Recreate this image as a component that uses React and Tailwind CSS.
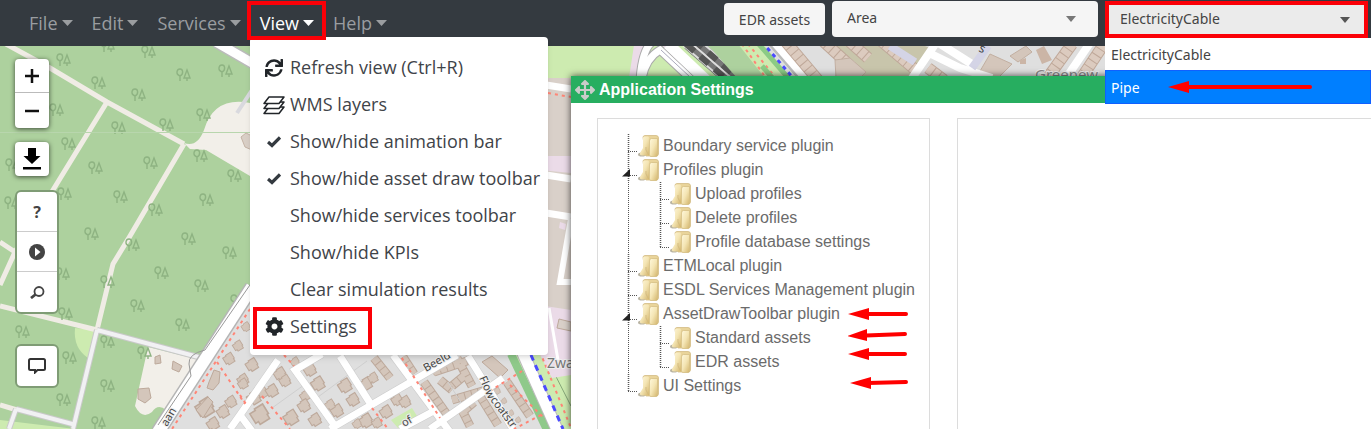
import React from "react";
import { FaSync, FaCog, FaArrowsAlt } from "react-icons/fa";

const TREES = [
  [63, 60], [107, 46], [148, 52], [183, 75], [225, 71], [98, 83], [138, 95], [203, 115], [166, 125],
  [56, 110], [118, 128], [68, 144], [95, 168], [150, 163], [200, 156], [234, 176], [120, 197], [64, 194],
  [11, 203], [12, 165], [155, 210], [206, 200], [91, 234], [188, 239], [132, 245], [229, 253], [161, 273],
  [201, 286], [62, 274], [107, 282], [137, 306], [182, 325], [65, 314], [22, 332], [69, 358], [107, 342],
  [107, 386], [63, 400], [98, 423], [237, 301], [144, 353],
];

const HOUSES = [
  [238, 346, 9], [229, 359, 10], [252, 365, 11], [243, 380, 10], [254, 398, 12], [263, 393, 9], [280, 374, 11],
  [285, 381, 10], [272, 391, 11], [205, 408, 16], [223, 412, 11], [231, 402, 10], [213, 424, 11], [310, 370, 11],
  [318, 384, 12], [295, 362, 8], [305, 396, 9], [345, 386, 12], [353, 400, 11], [337, 411, 11], [366, 384, 11],
  [373, 378, 9], [260, 415, 16], [291, 418, 13], [304, 406, 11], [315, 420, 11], [330, 405, 9], [386, 412, 11],
  [397, 400, 10], [405, 402, 10], [366, 421, 12], [377, 423, 9], [243, 384, 9], [357, 424, 8], [497, 391, 6],
  [504, 401, 5], [511, 413, 5], [518, 420, 5], [246, 327, 8],
];

const ROWS_OF_HOUSES = [
  "M374 358 L390 378", "M403 357 L414 374", "M424 382 L448 416", "M432 372 L448 362", "M434 372 L470 360",
  "M457 358 L472 386", "M452 400 L486 390", "M480 396 L498 425", "M507 382 L530 416", "M440 380 L452 390",
  "M464 376 L452 386", "M462 410 L470 426", "M474 402 L460 414",
];

const DOTTED = [
  "M250 309 L172 429", "M217 362 L245 404", "M262 396 L290 429", "M284 355 L294 366", "M398 352 L440 418",
  "M372 408 L388 429", "M522 371 L490 391", "M510 385 L544 418", "M541 415 L514 429", "M540 352 L571 428",
  "M548 93 L571 97", "M240 395 L246 404",
];

const ROADS = [
  "M278 360 L240 415 L230 429", "M240 415 L252 431", "M322 354 L295 370 L335 426", "M340 356 L370 403",
  "M330 429 L457 355", "M393 355 L450 432", "M430 429 L503 378", "M468 356 L488 388 L513 429", "M400 429 L432 412",
];

function MapBackground() {
  return (
    <svg
      aria-hidden="true"
      className="absolute inset-0 h-full w-full"
      viewBox="0 0 1371 429"
      preserveAspectRatio="xMinYMin slice"
    >
      <defs>
        <g id="tree" fill="none" stroke="#8eb382" strokeWidth="1.400">
          <path d="M-3 6 V1 M-3 1 C-8 -1 -6 -6 -3 -6 C0 -6 1 -1 -3 1 M4 6 V3 M1 3 L4 -5 L7 3 Z" />
        </g>
      </defs>
      <rect width="1371" height="429" fill="#add19e" />
      <path d="M75 328 L97 330 L88 358 Q73 348 75 328Z M0 420 L75 429 H0Z" fill="#cdebb0" />
      <path d="M184 143 Q197 148 204 130 Q214 96 250 103 V176 L206 150 L190 149Z" fill="#f2efe9" />
      <path d="M148 347 L200 360 L166 410 Q158 403 152 412 Q142 420 135 406Z" fill="#f2efe9" />
      <g fill="none" stroke="#f0ece5" strokeWidth="5">
        <path d="M6 44 L50 68 L107 102 L184 144" />
        <path d="M107 102 L53 190 L15 252 L0 285 M0 242 L15 252" />
        <path d="M184 144 L130 236 L113 264 L97 330" />
        <path d="M0 306 L97 330 M0 405 L17 410" />
      </g>
      {TREES.map(([x, y]) => (
        <use key={`${x}-${y}`} href="#tree" x={x} y={y} />
      ))}
      <path d="M97 330 L202 358 M97 330 L73 429 M16 409 L76 425 M16 409 L9 429" stroke="#c9c9c9" strokeWidth="6" fill="none" />
      <path d="M97 330 L202 358 M97 330 L73 429 M16 409 L76 425 M16 409 L9 429" stroke="#f1f1f3" strokeWidth="4" fill="none" />
      <path d="M0 132.500 H250" stroke="#b8d6ad" />
      <path d="M216 42 L254 64" stroke="#bbb" strokeWidth="12" />
      <path d="M216 42 L254 64" stroke="#fff" strokeWidth="9" />
      <path d="M252 90 L237 113" stroke="#d9d9de" strokeWidth="4" />
      <path d="M241 137 L246 133 L252 136 V150 L245 147Z" fill="#d9cfc6" stroke="#c4b3a6" />

      <path d="M250 290 L571 290 L571 429 H163Z" fill="#dfdfdf" />
      <g fill="#d4c6bb" stroke="#bda99b" strokeWidth="1">
        {HOUSES.map(([x, y, s]) => (
          <path
            key={`${x}-${y}`}
            transform={`translate(${x} ${y}) rotate(-32) scale(${s / 10})`}
            d="M-5 -4 H-1 V-5 H5 V2 H4 V5 H-3 V3 H-5Z"
          />
        ))}
        <path d="M209 382 L214 370 L220 372 L219 383 L213 390 L207 388Z M196 410 L208 397 L213 402 L203 418Z" />
        <path d="M138 389 L149 388 L151 398 L145 403 L138 399Z M173 361 L182 366 L179 372 L172 369Z M155 357 L160 355 L161 363 L155 364Z" />
        <path d="M482 362 L492 356 L508 370 L500 378Z" />
      </g>
      <g fill="none" stroke="#bda99b" strokeWidth="9">
        {ROWS_OF_HOUSES.map((d) => <path key={d} d={d} />)}
      </g>
      <g fill="none" stroke="#d4c6bb" strokeWidth="7" strokeDasharray="6 1">
        {ROWS_OF_HOUSES.map((d) => <path key={d} d={d} />)}
      </g>
      <path d="M272 408 L304 385 M318 397 L367 361 M448 382 L462 404" stroke="#cfcfcf" fill="none" />
      <path d="M391 420 L412 408 L417 416 L398 428Z" fill="#cdebb0" />
      <g fill="none" stroke="#cbcbcb" strokeWidth="8">
        {ROADS.map((d) => <path key={d} d={d} />)}
      </g>
      <g fill="none" stroke="#fff" strokeWidth="7">
        {ROADS.map((d) => <path key={d} d={d} />)}
      </g>

      <path d="M252 287 L158 432" stroke="#b5b5b5" strokeWidth="15" />
      <path d="M252 287 L158 432" stroke="#fff" strokeWidth="12" />
      <path d="M252 282 L205 350 Q188 354 189 364 L191 376 L158 425" stroke="#999" fill="none" />

      <path d="M510 355 H571 V429 H545Z" fill="#cdebb0" />
      <path d="M511 354 L548 432" stroke="#8fc98a" strokeWidth="8" />
      <path d="M522 351 L558 432" stroke="#bbb" strokeWidth="13" />
      <path d="M522 351 L558 432" stroke="#fff" strokeWidth="11" />
      <path d="M531 355 L563 429" stroke="#4b4bff" strokeWidth="3" strokeDasharray="6 5" />
      <path d="M545 355 L571 406" stroke="#86a779" />

      <path d="M540 76 H571 V310 H540Z" fill="#d9d0c9" />
      <path d="M540 156 H571 V173 L540 170Z M545 306 L571 310 V375 L552 378 L540 355Z" fill="#ebdbe8" />
      <path d="M540 84 L571 89 M540 174 L571 179 M540 212 L571 217" stroke="#fff" strokeWidth="7" />
      <path d="M571 219 L560 282 H571" stroke="#fff" strokeWidth="6" fill="none" />
      <path d="M549 308 L558 360" stroke="#fff" strokeWidth="3" />
      <path d="M559 319 L571 322 V331 L557 328Z" fill="#d9d0c9" stroke="#bda99b" />
      <path d="M560 222 L566 224 L565 230 L559 228Z" fill="#ebdbe8" />

      <g fill="none" stroke="#ff8576" strokeWidth="2" strokeDasharray="3 4">
        {DOTTED.map((d) => <path key={d} d={d} />)}
      </g>
      <g fill="#444" stroke="#eee" strokeWidth="2" paintOrder="stroke" fontFamily="'Noto Sans', sans-serif" fontSize="11">
        <text transform="translate(167 427) rotate(-60)">aan</text>
        <text transform="translate(426 372) rotate(-30)">Beeld</text>
        <text transform="translate(479 378) rotate(66)">Flow</text>
        <text transform="translate(490 400) rotate(53)">coatstr</text>
        <text transform="translate(404 427) rotate(-30)">of</text>
        <text x="547" y="368" fontSize="14" fill="#777">Zwa</text>
      </g>

      <path d="M540 40 H1371 V76 H540Z" fill="#dfdfdf" />
      <path d="M540 40 H760 L790 78 H540Z" fill="#cdebb0" />
      <path d="M634 45 H648 L640 78 H629Z M662 45 L668 46 L700 78 H686Z" fill="#ebdbe8" />
      <path d="M640 80 Q642 50 652 42 M642 78 Q646 58 660 50 L692 80" stroke="#aaa" strokeWidth="9" fill="none" />
      <path d="M640 80 Q642 50 652 42 M642 78 Q646 58 660 50 L692 80" stroke="#fff" strokeWidth="7" fill="none" />
      <path d="M668 44 L706 80" stroke="#fff" strokeWidth="11" />
      <path d="M661 50 L690 77" stroke="#aab" />
      <path d="M690 42 L736 82" stroke="#777" strokeWidth="17" />
      <path d="M690 42 L736 82 M698 39 L744 79 M683 45 L729 85" stroke="#ddd" strokeWidth="2" />
      <path d="M694 40 L740 80 M686 44 L732 84" stroke="#555" strokeWidth="6" strokeDasharray="11 8" />
      <path d="M707 44 H738 L765 78 H737Z" fill="#add19e" />
      <path d="M742 44 L766 78 M748 44 L776 78" stroke="#ff8576" strokeWidth="2" strokeDasharray="3 4" />
      <path d="M757 42 L790 80 M770 42 L802 80 M762 66 L774 80" stroke="#8ccb85" strokeWidth="5" />
      <path d="M762 42 L795 80" stroke="#4b4bff" strokeWidth="3" strokeDasharray="4 4" />
      <path d="M773 38 L812 83" stroke="#bbb" strokeWidth="16" />
      <path d="M774 38 L813 83" stroke="#fff" strokeWidth="13" />
      <path d="M828 44 H920 L935 50 L916 78 H832 L855 62Z" fill="#c8c5ab" />
      <g fill="none" stroke="#bfa899" strokeWidth="12">
        <path d="M786 42 L818 80 M822 40 L846 62 M850 42 L868 58 M880 40 L918 72" />
        <path d="M928 68 L944 80 M1072 44 L1046 80 M1104 44 L1080 80" />
      </g>
      <g fill="none" stroke="#dccbbf" strokeWidth="10" strokeDasharray="6 1">
        <path d="M786 42 L818 80 M822 40 L846 62 M850 42 L868 58 M880 40 L918 72" />
        <path d="M928 68 L944 80 M1072 44 L1046 80 M1104 44 L1080 80" />
      </g>
      <path d="M835 60 L850 58 L866 72 L860 78 H836Z M990 54 L1012 64 L998 78 H976Z M1010 56 L1026 46 L1032 52 L1018 62Z" fill="#d4c6bb" stroke="#c2afa1" />
      <path d="M1036 50 L1044 46 L1052 60 L1042 64Z M1020 60 L1026 58 L1026 64 L1020 64Z" fill="#cbb5a6" />
      <path d="M938 40 L908 84 M927 52 L960 68 L992 78 M934 40 L975 66 M1092 40 L1062 84" stroke="#fff" strokeWidth="8" fill="none" />
      <path d="M890 46 L915 62 M988 46 L972 68" stroke="#d4d4e6" strokeWidth="8" />
      <text transform="translate(978 51) rotate(25)" fill="#444" fontSize="12" fontFamily="'Noto Sans', sans-serif">s</text>
      <text x="1035" y="80" fill="#888" stroke="#eee" strokeWidth="2" paintOrder="stroke" fontSize="15" fontFamily="'Noto Sans', sans-serif">Greenew</text>
    </svg>
  );
}

const Caret = ({ className }) => (
  <svg aria-hidden="true" viewBox="0 0 10 6" preserveAspectRatio="none" className={className} fill="currentColor">
    <path d="M0 0H10L5 6Z" />
  </svg>
);

function NavItem({ label, active }) {
  return (
    <button
      type="button"
      className={`flex items-center gap-1 ${active ? "text-white" : "text-[#9a9da0]"}`}
    >
      {label}
      <Caret className="h-[6px] w-[11px]" />
    </button>
  );
}

const LayersIcon = () => (
  <svg aria-hidden="true" viewBox="0 0 22 20" className="h-5 w-[22px]" fill="#fff" stroke="#212529" strokeWidth="1.500" strokeLinejoin="round">
    <path d="M1 18.500 L6 12 H21 L16 18.500Z" />
    <path d="M1 13.500 L6 7 H21 L16 13.500Z" />
    <path d="M1 8.500 L6 2 H21 L16 8.500Z" />
  </svg>
);

const CheckIcon = () => (
  <svg aria-hidden="true" viewBox="0 0 14 12" className="h-3 w-[14px]" fill="none" stroke="#343a40" strokeWidth="3.200">
    <path d="M1 6 L5 9.500 L13 1.500" />
  </svg>
);

const MENU = [
  { label: "Refresh view (Ctrl+R)", icon: <FaSync size={18} /> },
  { label: "WMS layers", icon: <LayersIcon /> },
  { label: "Show/hide animation bar", icon: <CheckIcon /> },
  { label: "Show/hide asset draw toolbar", icon: <CheckIcon /> },
  { label: "Show/hide services toolbar" },
  { label: "Show/hide KPIs" },
  { label: "Clear simulation results" },
  { label: "Settings", icon: <FaCog size={19} />, marked: true },
];

function ViewMenu() {
  return (
    <div className="absolute top-[37px] left-[250px] z-20 w-[298px] rounded bg-white pt-3 pb-[10px] shadow-md">
      {MENU.map(({ label, icon, marked }) => (
        <button
          key={label}
          type="button"
          className="relative flex h-[37px] w-full items-center pl-3 text-left text-[18px] whitespace-nowrap text-[#3f4449]"
        >
          <span className="mr-1 flex w-6 flex-none items-center justify-center text-[#212529]">{icon}</span>
          {label}
          {marked && <span className="absolute -top-px left-[3px] h-[42px] w-[119px] border-4 border-[#fb0007]" />}
        </button>
      ))}
    </div>
  );
}

function MapToolbar() {
  const small = "flex h-10 w-10 items-center justify-center";
  return (
    <aside className="w-[571px] flex-none pt-[13px] pl-[15px] text-[#222]">
      <div className="w-[34px] divide-y divide-[#bbb] rounded bg-white shadow-[0_1px_5px_rgba(0,0,0,0.65)]">
        <button type="button" aria-label="Zoom in" className="flex h-[34px] w-full items-center justify-center">
          <svg viewBox="0 0 14 14" className="size-[14px]" stroke="#111" strokeWidth="2.500"><path d="M0 7H14M7 0V14" /></svg>
        </button>
        <button type="button" aria-label="Zoom out" className="flex h-[35px] w-full items-center justify-center">
          <svg viewBox="0 0 14 14" className="size-[14px]" stroke="#111" strokeWidth="2.500"><path d="M0 7H14" /></svg>
        </button>
      </div>
      <button
        type="button"
        aria-label="Download"
        className="mt-[14px] flex h-[34px] w-[34px] items-center justify-center rounded bg-white shadow-[0_1px_5px_rgba(0,0,0,0.65)]"
      >
        <svg viewBox="0 0 18 22" className="h-[22px] w-[18px]" fill="#000">
          <path d="M5 0H13V8H17.500L9 16L0.500 8H5Z M0 19H18V21.500H0Z" />
        </svg>
      </button>
      <div className="mt-[14px] w-11 divide-y divide-[#ccc] rounded-md border-2 border-[#7f9c75] bg-white">
        <button type="button" className={`${small} font-['Noto_Sans',sans-serif] text-[16px] font-bold text-[#444]`}>?</button>
        <button type="button" aria-label="Run" className={small}>
          <svg viewBox="0 0 16 16" className="size-4"><circle cx="8" cy="8" r="8" fill="#444" /><path d="M6 3.500L11.500 8L6 12.500Z" fill="#fff" /></svg>
        </button>
        <button type="button" aria-label="Search" className={small}>
          <svg viewBox="0 0 15 13" className="h-[13px] w-[15px]" fill="none" stroke="#444">
            <circle cx="9" cy="5.500" r="4.500" strokeWidth="1.800" />
            <path d="M5.500 8.500L1 12" strokeWidth="2.800" />
          </svg>
        </button>
      </div>
      <button
        type="button"
        aria-label="Comment"
        className="mt-[30px] flex size-11 items-center justify-center rounded-md border-2 border-[#7f9c75] bg-white"
      >
        <svg viewBox="0 0 18 16" className="h-4 w-[18px]" fill="none" stroke="#333" strokeWidth="2">
          <path d="M2.500 1H15.500Q17 1 17 2.500V10.500Q17 12 15.500 12H9.500L7 14.500V12H2.500Q1 12 1 10.500V2.500Q1 1 2.500 1Z" />
        </svg>
      </button>
    </aside>
  );
}

const FolderIcon = () => (
  <svg aria-hidden="true" viewBox="0 0 22 24" className="h-6 w-[22px] flex-none">
    <defs>
      <linearGradient id="folder" x1="0" y1="0" x2="1" y2="1">
        <stop offset="0" stopColor="#fff8dc" />
        <stop offset="0.500" stopColor="#f4e5b4" />
        <stop offset="1" stopColor="#d3b56c" />
      </linearGradient>
    </defs>
    <ellipse cx="4" cy="20.500" rx="4" ry="2" fill="#b9b4a3" />
    <path d="M5 3.500Q5 1.500 7 1.500H18Q20.500 1.500 20.500 4V20Q20.500 22 18 22H8Z" fill="#e9d49a" stroke="#cfb67a" strokeWidth="0.700" />
    <path d="M5 4Q5 2.500 6.500 2.500H10Q11 2.500 11 4V21.500H4Q1.500 21.500 2 19L5 14Z" fill="url(#folder)" />
    <path d="M11.500 7Q11.500 4.500 13.500 4.500H19.500V21Q19.500 22.500 18 22.500H13Q11.500 22.500 11.500 21Z" fill="url(#folder)" stroke="#d3bb80" strokeWidth="0.700" />
    <path d="M8 13V16L10 20" fill="none" stroke="#d3bb80" />
  </svg>
);

function Connector({ kind, wide }) {
  return (
    <svg aria-hidden="true" viewBox={wide ? "0 0 32 24" : "0 0 16 24"} className={wide ? "h-6 w-8 flex-none" : "h-6 w-4 flex-none"}>
      <g stroke="#555" strokeDasharray="1 1" fill="none">
        <path d={kind === "last" ? "M6.500 0V18" : "M6.500 0V24"} strokeWidth={wide ? 1 : 1.500} />
        {kind !== "line" && <path d="M6 17.500H15" />}
      </g>
      {kind === "open" && <path d="M0 18.500L8 11V18.500Z" fill="#222" />}
    </svg>
  );
}

const TREE = [
  { label: "Boundary service plugin", kind: "branch" },
  { label: "Profiles plugin", kind: "open" },
  { label: "Upload profiles", kind: "branch", child: true },
  { label: "Delete profiles", kind: "branch", child: true },
  { label: "Profile database settings", kind: "last", child: true },
  { label: "ETMLocal plugin", kind: "branch" },
  { label: "ESDL Services Management plugin", kind: "branch" },
  { label: "AssetDrawToolbar plugin", kind: "open" },
  { label: "Standard assets", kind: "branch", child: true },
  { label: "EDR assets", kind: "last", child: true },
  { label: "UI Settings", kind: "last" },
];

function SettingsPanel() {
  return (
    <section className="mt-[30px] flex min-w-0 flex-1 flex-col bg-white shadow-[0_0_7px_rgba(0,0,0,0.7)]">
      <h2 className="flex h-[27px] flex-none items-center gap-1 bg-[#27ae60] pl-1 font-['Liberation_Sans',sans-serif] text-[16px] font-bold text-white">
        <FaArrowsAlt size={20} color="#c9ccc9" />
        Application Settings
      </h2>
      <div className="flex flex-1 gap-[27px] pt-[15px] pl-[26px]">
        <div className="relative w-[333px] flex-none border border-b-0 border-[#dcdcdc] pt-[15px] pl-6">
          <ul className="font-['Liberation_Sans',sans-serif] text-[16px] text-[#6b6b6b]">
            {TREE.map(({ label, kind, child }) => (
              <li key={label} className="flex h-6 items-center whitespace-nowrap">
                {child && <Connector kind="line" wide />}
                <Connector kind={kind} />
                <FolderIcon />
                <span className="ml-[3px]">{label}</span>
              </li>
            ))}
          </ul>
          <svg aria-hidden="true" viewBox="0 0 60 84" className="absolute top-[187px] left-[250px] h-[84px] w-[60px]" fill="#f00" stroke="#f00" strokeLinecap="round">
            <path d="M18 8H58M18 29.500L57 28M18 48H57M20 77L58 76" strokeWidth="4" />
            <path d="M0 8L21 2V14Z M-1 30L19 23V35Z M0 48L21 42V54Z M2 77L23 71V83Z" stroke="none" />
          </svg>
        </div>
        <div className="flex-1 border-t border-l border-[#dcdcdc]" />
      </div>
    </section>
  );
}

export default function App() {
  return (
    <div className="relative flex h-screen flex-col overflow-hidden font-['Open_Sans','Noto_Sans',sans-serif]">
      <MapBackground />
      <header className="relative z-10 flex h-[46px] flex-none items-center bg-[#343a40] pr-[3px] pl-[29px]">
        <nav className="flex gap-[19px] text-[18px]">
          <NavItem label="File" />
          <NavItem label="Edit" />
          <NavItem label="Services" />
          <NavItem label="View" active />
          <NavItem label="Help" />
        </nav>
        <div className="ml-auto flex gap-[7px] self-start pt-px font-['Noto_Sans',sans-serif] text-[14px] text-[#444]">
          <button type="button" className="mt-[2px] h-8 w-[101px] rounded bg-[#f5f5f5]">EDR assets</button>
          <div className="relative">
            <select aria-label="Asset group" className="h-9 w-[266px] appearance-none rounded bg-[#f5f5f5] pr-8 pb-1 pl-[15px]">
              <option>Area</option>
            </select>
            <Caret className="pointer-events-none absolute top-[15px] right-[22px] h-[6px] w-[10px] text-[#777]" />
          </div>
          <div className="relative">
            <select
              aria-label="EDR asset type"
              className="h-[37px] w-[263px] appearance-none border-4 border-[#fb0007] bg-[#ebebeb] pr-8 pb-[2px] pl-[11px]"
            >
              <option>ElectricityCable</option>
              <option>Pipe</option>
            </select>
            <Caret className="pointer-events-none absolute top-4 right-[18px] h-[6px] w-[10px] text-[#555]" />
            <ul role="listbox" aria-label="EDR asset types" className="absolute top-[37px] -right-[3px] left-0 bg-white">
              <li role="option" aria-selected="false" className="flex h-8 items-center pl-[6px]">ElectricityCable</li>
              <li role="option" aria-selected="true" className="flex h-[34px] items-center border border-[#1060ff] bg-[#007fff] pl-[5px] text-white">
                Pipe
                <svg aria-hidden="true" viewBox="0 0 146 14" className="ml-7 h-[14px] w-[146px]" fill="#f00" stroke="#f00" strokeLinecap="round">
                  <path d="M20 7H142" strokeWidth="4" />
                  <path d="M0 7L21 1V13Z" stroke="none" />
                </svg>
              </li>
            </ul>
          </div>
        </div>
      </header>
      <ViewMenu />
      <span aria-hidden="true" className="absolute top-px left-[247px] z-30 h-[39px] w-[79px] border-4 border-[#fb0007]" />
      <main className="relative flex min-h-0 flex-1">
        <MapToolbar />
        <SettingsPanel />
      </main>
    </div>
  );
}
